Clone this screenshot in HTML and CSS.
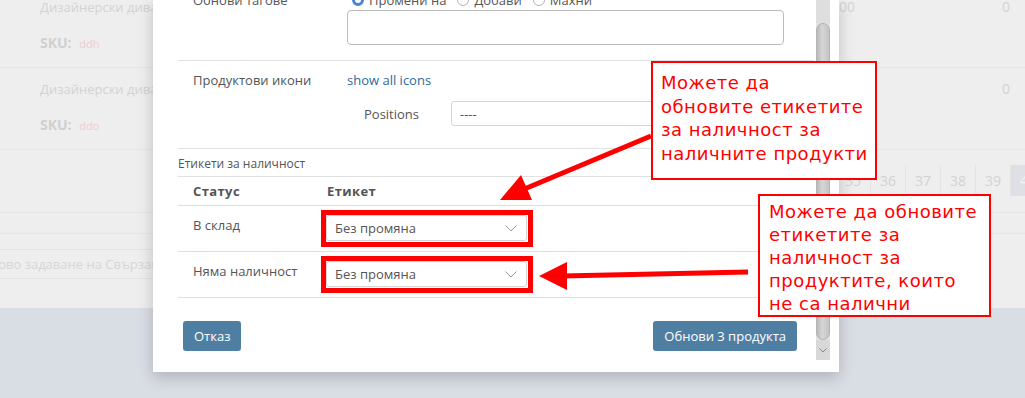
FILE: index.html
```html
<!DOCTYPE html>
<html lang="bg">
<head>
    <meta charset="UTF-8">
    <meta name="viewport" content="width=device-width, initial-scale=1.0">
    <title>Масова редакция на продукти</title>
    <link rel="stylesheet" href="styles.css">
</head>
<body>
    <div class="screen">
        <div class="backdrop">
            <div class="bg-row first">
                <div class="bg-product">
                    <div class="bg-name">Дизайнерски диван Верона</div>
                    <div class="bg-sku"><b>SKU:</b> <span>ddh</span></div>
                </div>
                <div class="bg-price">1200.00</div>
                <div class="bg-qty">0</div>
            </div>
            <div class="bg-row">
                <div class="bg-product">
                    <div class="bg-name">Дизайнерски диван Милано</div>
                    <div class="bg-sku"><b>SKU:</b> <span>ddo</span></div>
                </div>
                <div class="bg-price"></div>
                <div class="bg-qty">0</div>
            </div>
            <div class="bg-pager">
                <span>35</span><span>36</span><span>37</span><span>38</span><span>39</span><span class="active">40</span>
            </div>
            <div class="bg-strip"></div>
            <div class="bg-bulk">Масово задаване на Свързани продукти</div>
        </div>

        <div class="modal">
            <div class="modal-body">
                <div class="form-row first">
                    <div class="form-label">Обнови тагове</div>
                    <div class="form-field">
                        <div class="radios">
                            <label><span class="radio checked"></span>Промени на</label>
                            <label><span class="radio"></span>Добави</label>
                            <label><span class="radio"></span>Махни</label>
                        </div>
                        <div class="textarea"></div>
                    </div>
                </div>
                <div class="form-row icons">
                    <div class="form-label">Продуктови икони</div>
                    <div class="form-field">
                        <a class="link">show all icons</a>
                        <div class="positions">
                            <span class="positions-label">Positions</span>
                            <div class="select wide"><span>----</span></div>
                        </div>
                    </div>
                </div>
                <div class="section-title">Етикети за наличност</div>
                <div class="stock-table">
                    <div class="stock-row head">
                        <div class="cell-status">Статус</div>
                        <div class="cell-label">Етикет</div>
                    </div>
                    <div class="stock-row">
                        <div class="cell-status">В склад</div>
                        <div class="cell-label">
                            <div class="mark">
                                <div class="select">
                                    <span>Без промяна</span>
                                    <svg width="12" height="7" viewBox="0 0 12 7"><path d="M0.5 0.5 L6 6 L11.5 0.5" fill="none" stroke="#999" stroke-width="1"/></svg>
                                </div>
                            </div>
                        </div>
                    </div>
                    <div class="stock-row">
                        <div class="cell-status">Няма наличност</div>
                        <div class="cell-label">
                            <div class="mark">
                                <div class="select">
                                    <span>Без промяна</span>
                                    <svg width="12" height="7" viewBox="0 0 12 7"><path d="M0.5 0.5 L6 6 L11.5 0.5" fill="none" stroke="#999" stroke-width="1"/></svg>
                                </div>
                            </div>
                        </div>
                    </div>
                </div>
                <div class="modal-footer">
                    <button class="btn">Отказ</button>
                    <button class="btn">Обнови 3 продукта</button>
                </div>
            </div>
            <div class="scrollbar">
                <div class="scroll-track"></div>
                <div class="scroll-thumb"></div>
                <div class="scroll-down">
                    <svg width="8" height="5" viewBox="0 0 8 5"><path d="M0.5 0.5 L4 4 L7.5 0.5" fill="none" stroke="#888" stroke-width="1"/></svg>
                </div>
            </div>
        </div>

        <svg class="arrows" width="1025" height="398" viewBox="0 0 1025 398">
            <line x1="651" y1="136" x2="522" y2="190" stroke="#ff0000" stroke-width="5"/>
            <polygon points="500,200 521,175 532,200" fill="#ff0000"/>
            <line x1="748" y1="272" x2="562" y2="276" stroke="#ff0000" stroke-width="5"/>
            <polygon points="539,276 567,262 567,290" fill="#ff0000"/>
        </svg>

        <div class="note note-top">Можете да<br>обновите етикетите<br>за наличност за<br>наличните продукти</div>
        <div class="note note-bottom">Можете да обновите<br>етикетите за<br>наличност за<br>продуктите, които<br>не са налични</div>
    </div>
</body>
</html>
```

FILE: styles.css
```css
* {
    margin: 0;
    padding: 0;
    box-sizing: border-box;
}
body {
    font-family: 'Open Sans', sans-serif;
    background: #d9dde4;
    overflow: hidden;
}
.screen {
    position: relative;
    width: 1025px;
    height: 398px;
    overflow: hidden;
}

/* page behind the dialog */
.backdrop {
    height: 308px;
    background: #eeeeee;
    color: #d3d3d3;
    overflow: hidden;
}
.bg-row {
    display: flex;
    align-items: flex-start;
    padding: 11px 0 13px;
    border-bottom: 1px solid #e6e6e6;
}
.bg-row.first {
    margin-top: -14px;
}
.bg-product {
    width: 775px;
    padding-left: 40px;
}
.bg-name {
    font-size: 13px;
    line-height: 20px;
    white-space: nowrap;
}
.bg-sku {
    margin-top: 16px;
    font-size: 14px;
    line-height: 20px;
    color: #d0d0d0;
}
.bg-sku span {
    font-size: 11px;
    color: #f1cccc;
    margin-left: 4px;
}
.bg-price {
    width: 80px;
    text-align: right;
    font-size: 14px;
    line-height: 20px;
}
.bg-qty {
    flex: 1;
    text-align: right;
    padding-right: 15px;
    font-size: 14px;
    line-height: 20px;
}
.bg-pager {
    display: flex;
    justify-content: flex-end;
    margin-right: -20px;
    padding: 15px 0 16px;
    border-bottom: 1px solid #e6e6e6;
}
.bg-pager span {
    width: 35px;
    height: 31px;
    line-height: 31px;
    text-align: center;
    font-size: 14px;
    border-left: 1px solid #e4e4e4;
}
.bg-pager span.active {
    background: #dde1e5;
    color: #f4f4f4;
}
.bg-strip {
    height: 21px;
    border-bottom: 1px solid #e6e6e6;
}
.bg-bulk {
    width: 600px;
    margin-top: 15px;
    height: 30px;
    line-height: 28px;
    border-top: 1px solid #dfe4ea;
    border-bottom: 1px solid #e3e3e3;
    font-size: 13px;
    text-indent: -27px;
    white-space: nowrap;
    color: #d6d6d6;
}

/* dialog */
.modal {
    position: absolute;
    left: 153px;
    top: 0;
    width: 686px;
    height: 372px;
    background: #fff;
    box-shadow: 0 5px 15px rgba(0, 0, 0, 0.2);
    display: flex;
    padding: 0 9px 12px 25px;
    color: #555;
    font-size: 13px;
}
.modal-body {
    flex: 1;
    overflow: hidden;
}
.form-row {
    display: flex;
    border-bottom: 1px solid #e1e1e1;
}
.form-row.first {
    margin-top: -25px;
    padding: 15px 0;
}
.form-label {
    width: 169px;
    padding-left: 15px;
    line-height: 20px;
}
.form-field {
    width: 437px;
}
.radios {
    display: flex;
    gap: 11px;
    line-height: 20px;
    padding-left: 5px;
}
.radios label {
    display: flex;
    align-items: center;
}
.radio {
    width: 12px;
    height: 12px;
    border: 1px solid #b5b5b5;
    border-radius: 50%;
    margin-right: 5px;
    background: #fff;
}
.radio.checked {
    border: 3px solid #4a86c5;
    background: #fff;
}
.textarea {
    height: 35px;
    border: 1px solid #bbb;
    border-radius: 4px;
}
.form-row.icons {
    padding: 9px 0 22px;
}
.link {
    display: block;
    color: #2f6a9c;
    line-height: 20px;
}
.positions {
    display: flex;
    align-items: center;
    margin-top: 11px;
}
.positions-label {
    width: 104px;
    padding-left: 17px;
}
.select {
    display: flex;
    align-items: center;
    justify-content: space-between;
    width: 201px;
    height: 26px;
    border: 1px solid #d4d4d4;
    border-radius: 3px;
    padding: 0 9px 0 8px;
    background: #fff;
    color: #555;
}
.select.wide {
    width: 333px;
    height: 25px;
}
.mark {
    display: inline-block;
    border: 5px solid #ff0000;
    margin: -5px;
    padding: 0 1px 1px 0;
}
.section-title {
    font-size: 12px;
    line-height: 17px;
    padding: 6px 0 4px;
    border-bottom: 1px solid #e1e1e1;
}
.stock-row {
    display: flex;
    border-bottom: 1px solid #dedede;
}
.stock-row.head {
    font-weight: bold;
    letter-spacing: 0.4px;
    line-height: 18px;
    padding: 5px 0 5px;
}
.cell-status {
    width: 148px;
    padding-left: 15px;
}
.stock-row:not(.head) {
    height: 46px;
}
.stock-row:not(.head) .cell-status {
    padding-top: 10px;
    line-height: 18px;
}
.stock-row:not(.head) .cell-label {
    padding-top: 9px;
}
.stock-row.head .cell-label {
    padding-left: 1px;
}
.modal-footer {
    display: flex;
    justify-content: space-between;
    margin-top: 23px;
    padding: 0 17px 0 5px;
}
.btn {
    height: 30px;
    padding: 0 11px;
    border: none;
    border-radius: 3px;
    background: #4f7ea3;
    color: #fff;
    font-family: 'Open Sans', sans-serif;
    font-size: 13px;
}

/* scrollbar of the dialog body */
.scrollbar {
    width: 14px;
    margin-left: 2px;
    height: 360px;
    display: flex;
    flex-direction: column;
    background: #e2e2e2;
}
.scroll-track {
    height: 23px;
    background: #dedede;
}
.scroll-thumb {
    flex: 1;
    border-radius: 7px;
    background: linear-gradient(to right, #b9b9b9, #d6d6d6 45%, #c3c3c3);
    border: 1px solid #b4b4b4;
}
.scroll-down {
    height: 20px;
    display: flex;
    justify-content: center;
    align-items: center;
    background: #d8d8d8;
}

/* annotations */
.arrows {
    position: absolute;
    left: 0;
    top: 0;
    pointer-events: none;
}
.note {
    position: absolute;
    background: #fff;
    border: 2px solid #ff0000;
    color: #ff0000;
    font-family: 'DejaVu Sans', sans-serif;
    font-size: 18px;
    letter-spacing: 0.5px;
    white-space: nowrap;
}
.note-top {
    left: 651px;
    top: 61px;
    width: 226px;
    height: 119px;
    line-height: 23.5px;
    padding: 8px 8px;
}
.note-bottom {
    left: 758px;
    top: 194px;
    width: 233px;
    height: 123px;
    line-height: 23px;
    padding: 4px 9px;
}
```
